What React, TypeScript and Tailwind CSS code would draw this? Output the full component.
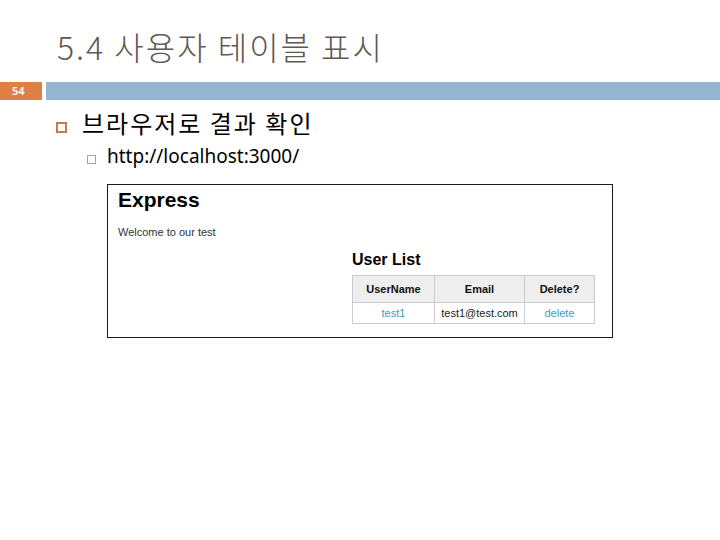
import React from "react";

const slideFont = { fontFamily: '"Noto Sans", "Noto Sans CJK KR", sans-serif' };

function BrowserShot() {
  return (
    <div
      className="ml-[107px] mt-[18px] w-[506px] h-[154px] border border-[#1a1a1a] bg-white pl-[10px] pt-[4px]"
      style={{ fontFamily: '"Liberation Sans", Arial, sans-serif' }}
    >
      <div className="text-[21px] leading-none font-bold text-black">Express</div>
      <div className="mt-[17px] text-[11px] leading-none text-[#333]">Welcome to our test</div>
      <div className="ml-[234px] mt-[14px]">
        <div className="text-[16px] leading-none font-bold text-black">User List</div>
        <table className="mt-[7px] border-collapse text-[11px] text-center">
          <thead>
            <tr className="bg-[#eeeeee] h-[27px]">
              <th className="w-[82px] border border-[#cccccc] font-bold text-[#111]">UserName</th>
              <th className="w-[90px] border border-[#cccccc] font-bold text-[#111]">Email</th>
              <th className="w-[70px] border border-[#cccccc] font-bold text-[#111]">Delete?</th>
            </tr>
          </thead>
          <tbody>
            <tr className="h-[21px]">
              <td className="border border-[#cccccc] text-[#3a9cc9]">test1</td>
              <td className="border border-[#cccccc] text-[#222]">test1@test.com</td>
              <td className="border border-[#cccccc] text-[#3a9cc9]">delete</td>
            </tr>
          </tbody>
        </table>
      </div>
    </div>
  );
}

export default function App() {
  return (
    <div className="w-[720px] h-[540px] bg-white overflow-hidden" style={slideFont}>
      <div
        className="pl-[57px] pt-[30px] text-[32px] leading-none font-light tracking-[2px] text-[#5f5853]"
        style={{ fontFamily: '"Noto Sans CJK KR", sans-serif' }}
      >
        5.4 사용자 테이블 표시
      </div>

      <div className="mt-[20px] flex h-[18px] gap-[4px]">
        <div className="w-[42px] bg-[#dd8047] flex items-center pl-[12px] text-[11px] text-white font-semibold">54</div>
        <div className="flex-1 bg-[#94b6d2]" />
      </div>

      <div className="mt-[11px] flex items-start pl-[56px]">
        <div className="mt-[11px] w-[11px] h-[11px] border-2 border-[#c77b4b]" />
        <div
          className="ml-[15px] text-[24px] leading-none tracking-[2px] text-black"
          style={{ fontFamily: '"Noto Sans CJK KR", sans-serif' }}
        >
          브라우저로 결과 확인
        </div>
      </div>

      <div className="mt-[12px] flex items-start pl-[87px]">
        <div className="mt-[8px] w-[9px] h-[9px] border border-[#9aa6b2]" />
        <div className="ml-[11px] text-[19px] leading-none text-black">http://localhost:3000/</div>
      </div>

      <BrowserShot />
    </div>
  );
}
